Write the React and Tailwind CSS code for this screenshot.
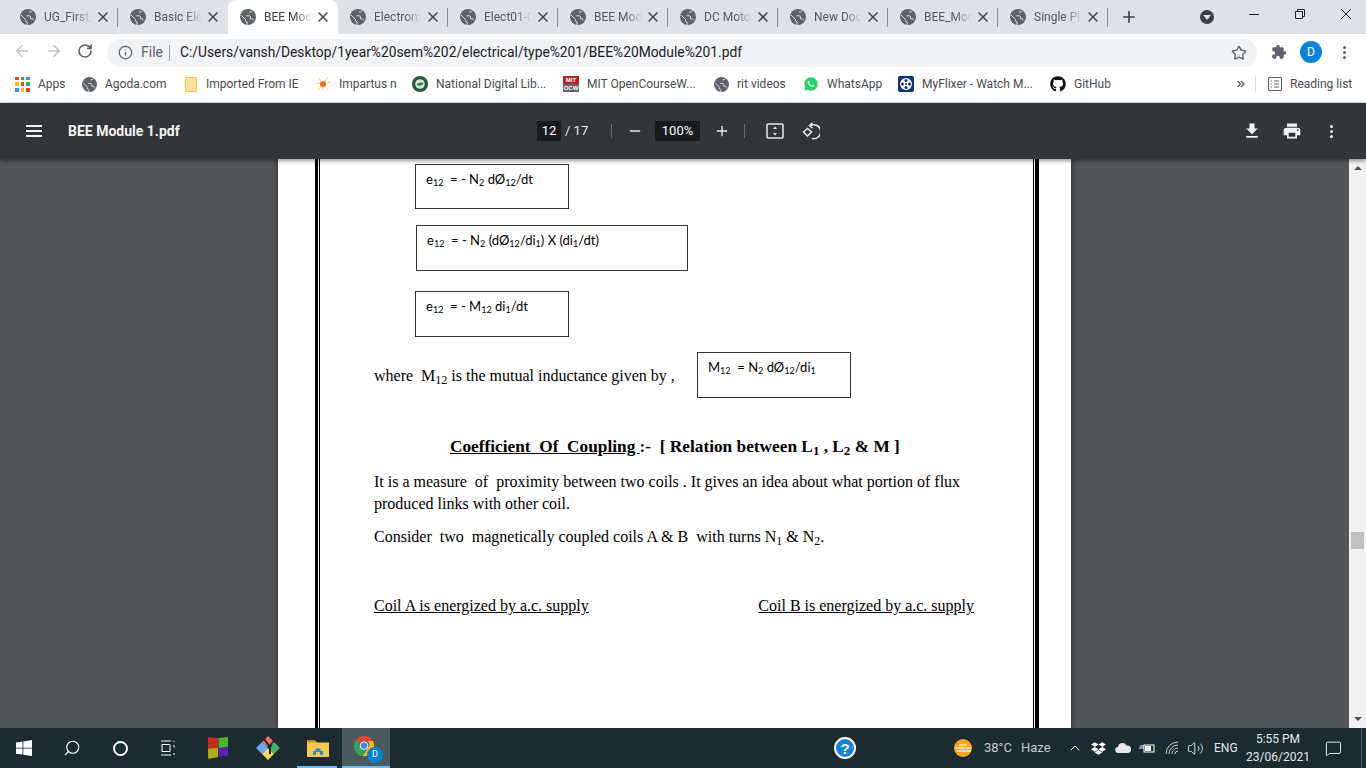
import { ArrowLeft, ArrowRight, RotateCw, Info, Star, X, Plus, Minus, ChevronUp, ChevronsRight, Search, MessageSquare, Volume2 } from 'lucide-react'
import { FaGithub, FaDropbox } from 'react-icons/fa'
import { RiWhatsappFill } from 'react-icons/ri'

const tabs = [
  { title: 'UG_First_', line: true },
  { title: 'Basic Ele', line: false },
  { title: 'BEE Mod', line: false, active: true },
  { title: 'Electrom', line: true },
  { title: 'Elect01-C', line: true },
  { title: 'BEE Mod', line: true },
  { title: 'DC Moto', line: true },
  { title: 'New Doc', line: true },
  { title: 'BEE_Moc', line: true },
  { title: 'Single Pl', line: true },
]

function Globe({ className = 'w-4 h-4' }) {
  return (
    <svg viewBox="0 0 16 16" className={`${className} shrink-0`}>
      <circle cx="8" cy="8" r="8" fill="#5f6368" />
      <path d="M1 6l4.500 4.500v1a1.600 1.600 0 0 0 1.600 1.600V16M9 3h1.600A1.600 1.600 0 0 0 12 1.600M6.500 6.800h3.100a.8.8 0 0 1 .8.8v2.200h1.400c1 0 1.600.7 1.900 1.600" fill="none" stroke="#e8eaed" strokeWidth="0.9" />
    </svg>
  )
}

function Tab({ tab }) {
  return (
    <div className={`relative w-[110px] h-[34px] flex items-center pl-3 shrink-0 ${tab.active ? 'bg-white rounded-t-lg' : ''}`}>
      <Globe />
      <span className={`ml-2 w-[48px] overflow-hidden whitespace-nowrap text-[12px] [mask-image:linear-gradient(to_right,black_65%,transparent)] ${tab.active ? 'text-[#3c4043]' : 'text-[#55585c]'}`}>
        {tab.title}
      </span>
      <X className="ml-[3px] w-4 h-4 text-[#45484c]" strokeWidth={2.4} />
      {tab.line && <div className="absolute right-0 top-[8px] h-[19px] w-px bg-[#8a8d91]"></div>}
    </div>
  )
}

function Bookmark({ width, icon, label }) {
  return (
    <div className="flex items-center gap-2 shrink-0" style={{ width }}>
      {icon}
      <span className="text-[12px] text-[#484b4f] whitespace-nowrap">{label}</span>
    </div>
  )
}

function AppsIcon() {
  const colors = ['#ea4335', '#34a853', '#4285f4', '#fbbc04', '#ea4335', '#34a853', '#4285f4', '#fbbc04', '#ea4335']
  return (
    <div className="w-[15px] h-[15px] grid grid-cols-3 gap-[2px]">
      {colors.map((c, i) => (
        <div key={i} style={{ background: c }}></div>
      ))}
    </div>
  )
}

function ImpartusIcon() {
  return (
    <svg viewBox="0 0 16 16" className="w-4 h-4">
      <path d="M8 8L3 1M8 8l5-7M8 8L0 7M8 8l8-2M8 8l-5 6M8 8l5 6M8 8v7" stroke="#f5cf62" strokeWidth="1" />
      <circle cx="8" cy="8" r="3" fill="#ee6c2a" />
    </svg>
  )
}

function NationalIcon() {
  return (
    <svg viewBox="0 0 16 16" className="w-4 h-4">
      <circle cx="8" cy="8" r="8" fill="#24563a" />
      <circle cx="8" cy="8" r="4.800" fill="#d8e4d8" />
      <path d="M4.500 9c2-2.500 4-3 7-2-1 2.500-3.500 3.500-7 2z" fill="#3b7a52" />
    </svg>
  )
}

function FlixerIcon() {
  return (
    <svg viewBox="0 0 16 16" className="w-4 h-4">
      <rect width="16" height="16" rx="2" fill="#12337c" />
      <circle cx="8" cy="8" r="6" fill="#fff" />
      <circle cx="8" cy="8" r="1" fill="#12337c" />
      <circle cx="8" cy="4.500" r="1.500" fill="#12337c" />
      <circle cx="8" cy="11.500" r="1.500" fill="#12337c" />
      <circle cx="4.500" cy="8" r="1.500" fill="#12337c" />
      <circle cx="11.500" cy="8" r="1.500" fill="#12337c" />
    </svg>
  )
}

function ChromeIcon() {
  return (
    <div className="relative w-[24px] h-[24px]">
      <svg viewBox="0 0 24 24" className="w-[22px] h-[22px]">
        <path d="M11 0a11 11 0 0 1 9.500 5.500H11a5.500 5.500 0 0 0-5 3.200L2.700 3.800A11 11 0 0 1 11 0z" fill="#ea4335" />
        <path d="M2.700 3.800L7.500 12a4.500 4.500 0 0 0 5 3l-3 6.900A11 11 0 0 1 2.700 3.800z" fill="#34a853" />
        <path d="M20.500 5.500A11 11 0 0 1 9.500 21.900L15 13a4.500 4.500 0 0 0-.5-7.500z" fill="#fbbc04" />
        <circle cx="11" cy="10.500" r="4.200" fill="#4285f4" stroke="#fff" strokeWidth="1" />
      </svg>
      <div className="absolute right-[-5px] bottom-[-3px] w-[16px] h-[16px] rounded-full bg-[#0b7fd0] flex items-center justify-center text-[9px] text-white">D</div>
    </div>
  )
}

function PdfBox({ className, children }) {
  return <div className={`border border-[#333] text-[13px] [&_sub]:text-[70%] font-['Lato',sans-serif] text-black leading-[18px] shrink-0 ${className}`}>{children}</div>
}

export default function App() {
  return (
    <div className="w-[1366px] h-[768px] overflow-hidden flex flex-col font-['Roboto',sans-serif] bg-white">
      {/* tab strip */}
      <div className="h-[34px] shrink-0 bg-[#dee1e6] flex items-center pl-2">
        {tabs.map((tab, i) => (
          <Tab key={i} tab={tab} />
        ))}
        <Plus className="ml-[12px] w-[18px] h-[18px] text-[#3c4043]" strokeWidth={2.2} />
        <div className="ml-[62px] w-[14px] h-[14px] rounded-full bg-[#3c4043] flex items-center justify-center">
          <div className="w-0 h-0 border-x-[4px] border-x-transparent border-t-[5px] border-t-[#dee1e6]"></div>
        </div>
        <div className="ml-[35px] w-[10px] h-px bg-[#222] mb-[6px]"></div>
        <svg viewBox="0 0 10 10" className="ml-[36px] w-[10px] h-[10px] mb-[6px]" fill="none" stroke="#222">
          <path d="M2.500 2.500V.5h7v7h-2M.5 2.500h7v7h-7z" />
        </svg>
        <svg viewBox="0 0 10 10" className="ml-[36px] w-[10px] h-[10px] mb-[6px]" fill="none" stroke="#222">
          <path d="M0 0l10 10M10 0L0 10" />
        </svg>
      </div>

      {/* address bar */}
      <div className="h-[33px] shrink-0 bg-white flex items-center">
        <ArrowLeft className="ml-[13px] w-[18px] h-[18px] text-[#bdc1c6]" strokeWidth={2} />
        <ArrowRight className="ml-[14px] w-[18px] h-[18px] text-[#bdc1c6]" strokeWidth={2} />
        <RotateCw className="ml-[14px] w-[16px] h-[16px] text-[#5f6368]" strokeWidth={2.4} />
        <div className="ml-[14px] w-[1150px] h-[28px] rounded-full bg-[#f1f3f4] flex items-center pl-[11px] mt-[4px]">
          <Info className="w-[15px] h-[15px] text-[#5f6368]" strokeWidth={2} />
          <span className="ml-[8px] w-[21px] text-[14px] text-[#5f6368]">File</span>
          <div className="ml-[7px] w-px h-[16px] bg-[#9aa0a6]"></div>
          <span className="ml-[10px] text-[13.8px] text-[#202124] whitespace-nowrap">C:/Users/vansh/Desktop/1year%20sem%202/electrical/type%201/BEE%20Module%201.pdf</span>
          <Star className="ml-auto mr-[10px] w-[16px] h-[16px] text-[#5f6368]" strokeWidth={2} />
        </div>
        <svg viewBox="0 0 24 24" className="ml-[14px] w-[16px] h-[16px] mt-[3px]" fill="#5f6368">
          <path d="M20.500 11H19V7c0-1.100-.9-2-2-2h-4V3.500C13 2.120 11.880 1 10.500 1S8 2.120 8 3.500V5H4c-1.100 0-1.990.9-1.990 2v3.800H3.500c1.490 0 2.700 1.210 2.700 2.700s-1.210 2.700-2.700 2.700H2V20c0 1.100.9 2 2 2h3.800v-1.500c0-1.490 1.210-2.700 2.700-2.700 1.490 0 2.700 1.210 2.700 2.700V22H17c1.100 0 2-.9 2-2v-4h1.500c1.380 0 2.500-1.120 2.500-2.500S21.880 11 20.500 11z" />
        </svg>
        <div className="ml-[13px] mt-[3px] w-[22px] h-[22px] rounded-full bg-[#0b84d6] flex items-center justify-center text-[12px] text-white">D</div>
        <div className="ml-[21px] mt-[3px] flex flex-col gap-[2px]">
          <div className="w-[3px] h-[3px] rounded-full bg-[#5f6368]"></div>
          <div className="w-[3px] h-[3px] rounded-full bg-[#5f6368]"></div>
          <div className="w-[3px] h-[3px] rounded-full bg-[#5f6368]"></div>
        </div>
      </div>

      {/* bookmarks */}
      <div className="h-[36px] shrink-0 bg-white flex items-center pl-[15px] pb-px border-b border-[#dadce0]">
        <Bookmark width={67} icon={<AppsIcon />} label="Apps" />
        <Bookmark width={102} icon={<Globe className="w-[15px] h-[15px]" />} label="Agoda.com" />
        <Bookmark width={131} icon={<div className="w-[12px] h-[15px] ml-[1px] mr-[1px] rounded-[1px] bg-[#fde293] border border-[#f1c644]"></div>} label="Imported From IE" />
        <Bookmark width={97} icon={<ImpartusIcon />} label="Impartus n" />
        <Bookmark width={151} icon={<NationalIcon />} label="National Digital Lib..." />
        <Bookmark
          width={151}
          icon={
            <div className="w-4 h-4 flex flex-col font-['Liberation_Sans',sans-serif] font-bold text-[6px] leading-[8px] text-white text-center">
              <div className="bg-[#b3202a]">MIT</div>
              <div className="bg-[#666]">OCW</div>
            </div>
          }
          label="MIT OpenCourseW..."
        />
        <Bookmark width={89} icon={<Globe className="w-[15px] h-[15px]" />} label="rit videos" />
        <Bookmark width={95} icon={<RiWhatsappFill className="w-4 h-4 text-[#25d366]" />} label="WhatsApp" />
        <Bookmark width={152} icon={<FlixerIcon />} label="MyFlixer - Watch M..." />
        <Bookmark width={185} icon={<FaGithub className="w-4 h-4 text-[#111]" />} label="GitHub" />
        <ChevronsRight className="w-[12px] h-[12px] text-[#5f6368]" strokeWidth={3} />
        <div className="ml-[8px] w-px h-[16px] bg-[#dadce0]"></div>
        <svg viewBox="0 0 14 14" className="ml-[12px] w-[14px] h-[14px]" fill="none" stroke="#5f6368">
          <path d="M.5.5h13v13H.5zM3 4h1M6 4h5M3 7h1M6 7h5M3 10h1M6 10h5" />
        </svg>
        <span className="ml-[8px] text-[12px] text-[#484b4f] whitespace-nowrap">Reading list</span>
      </div>

      {/* pdf toolbar */}
      <div className="relative z-10 h-[56px] shrink-0 bg-[#323639] flex items-center shadow-[0_2px_4px_rgba(0,0,0,0.4)] text-white">
        <div className="ml-[26px] w-[16px] flex flex-col gap-[3px]">
          <div className="h-[2px] bg-[#f1f3f4]"></div>
          <div className="h-[2px] bg-[#f1f3f4]"></div>
          <div className="h-[2px] bg-[#f1f3f4]"></div>
        </div>
        <span className="ml-[26px] w-[469px] text-[14px] font-bold text-[#f1f3f4]">BEE Module 1.pdf</span>
        <div className="w-[24px] h-[20px] bg-[#191b1c] text-[13px] flex items-center justify-center">12</div>
        <span className="ml-[4px] w-[25px] text-[13px] text-[#e8eaed]">/ 17</span>
        <div className="ml-[21px] w-px h-[14px] bg-[#6b6f72]"></div>
        <Minus className="ml-[15px] w-[16px] h-[16px] text-[#e8eaed]" strokeWidth={2} />
        <div className="ml-[12px] w-[45px] h-[20px] bg-[#191b1c] text-[13px] flex items-center justify-center">100%</div>
        <Plus className="ml-[14px] w-[16px] h-[16px] text-[#e8eaed]" strokeWidth={2} />
        <div className="ml-[14px] w-px h-[14px] bg-[#6b6f72]"></div>
        <svg viewBox="0 0 18 16" className="ml-[21px] w-[18px] h-[16px]" fill="none" stroke="#e8eaed" strokeWidth="1.500">
          <rect x="1" y="1" width="16" height="14" rx="1" />
          <path d="M9 3.500L11 6H7zM9 12.500L11 10H7z" fill="#e8eaed" stroke="none" />
        </svg>
        <svg viewBox="0 0 18 18" className="ml-[18px] w-[18px] h-[18px]" fill="none" stroke="#e8eaed" strokeWidth="1.500">
          <path d="M5.500 6.500L1.500 10l4 4 4-4z" />
          <path d="M8.500 3.500A7 7 0 1 1 10 16.500" />
          <path d="M10.500 .8L7.500 3.500l3 2.700" />
        </svg>
        <svg viewBox="0 0 24 24" className="ml-[422px] w-[20px] h-[20px]" fill="#f1f3f4">
          <path d="M19 9h-4V3H9v6H5l7 7 7-7zM5 18v2h14v-2H5z" />
        </svg>
        <svg viewBox="0 0 24 24" className="ml-[20px] w-[20px] h-[20px]" fill="#f1f3f4">
          <path d="M19 8H5c-1.660 0-3 1.340-3 3v6h4v4h12v-4h4v-6c0-1.660-1.340-3-3-3zm-3 11H8v-5h8v5zm3-7c-.55 0-1-.45-1-1s.45-1 1-1 1 .45 1 1-.45 1-1 1zm-1-9H6v4h12V3z" />
        </svg>
        <div className="ml-[28px] flex flex-col gap-[2px]">
          <div className="w-[3px] h-[3px] rounded-full bg-[#f1f3f4]"></div>
          <div className="w-[3px] h-[3px] rounded-full bg-[#f1f3f4]"></div>
          <div className="w-[3px] h-[3px] rounded-full bg-[#f1f3f4]"></div>
        </div>
      </div>

      {/* pdf body */}
      <div className="flex-1 min-h-0 flex bg-[#525659]">
        <div className="w-[278px] shrink-0"></div>
        <div className="w-[793px] shrink-0 bg-white shadow-[0_0_6px_rgba(0,0,0,0.5)] pl-[37px] font-['Liberation_Serif',serif] text-black text-[16px] overflow-hidden">
          <div className="w-[724px] h-full border-l-[3px] border-r-[4px] border-black">
            <div className="ml-px mr-px h-full border-x border-black">
              <div className="pl-[54px] pt-[5px]">
                <div className="pl-[41px]">
                  <PdfBox className="w-[154px] h-[45px] pl-[10px] pt-[5px]">
                    e<sub>12</sub>&nbsp; = - N<sub>2</sub> dØ<sub>12</sub>/dt
                  </PdfBox>
                  <PdfBox className="mt-[16px] ml-px w-[272px] h-[46px] pl-[10px] pt-[5px]">
                    e<sub>12</sub>&nbsp; = - N<sub>2</sub> (dØ<sub>12</sub>/di<sub>1</sub>) X (di<sub>1</sub>/dt)
                  </PdfBox>
                  <PdfBox className="mt-[20px] w-[154px] h-[46px] pl-[10px] pt-[5px]">
                    e<sub>12</sub>&nbsp; = - M<sub>12</sub> di<sub>1</sub>/dt
                  </PdfBox>
                </div>
                <div className="mt-[15px] flex items-start">
                  <span className="w-[323px] shrink-0 pt-[15px] leading-[18px]">
                    where&nbsp; M<sub>12</sub> is the mutual inductance given by ,
                  </span>
                  <PdfBox className="w-[154px] h-[46px] pl-[10px] pt-[5px]">
                    M<sub>12</sub>&nbsp; = N<sub>2</sub> dØ<sub>12</sub>/di<sub>1</sub>
                  </PdfBox>
                </div>
                <h2 className="mt-[39px] ml-[76px] text-[17.3px] font-bold leading-[20px] whitespace-nowrap">
                  <span className="underline">Coefficient&nbsp; Of&nbsp; Coupling </span>:-&nbsp; [ Relation between L<sub>1</sub> , L<sub>2</sub> &amp; M ]
                </h2>
                <p className="mt-[14px] w-[600px] leading-[22px]">
                  It is a measure&nbsp; of&nbsp; proximity between two coils . It gives an idea about what portion of flux produced links with other coil.
                </p>
                <p className="mt-[11px] leading-[22px]">
                  Consider&nbsp; two&nbsp; magnetically coupled coils A &amp; B&nbsp; with turns N<sub>1</sub> &amp; N<sub>2</sub>.
                </p>
                <div className="mt-[47px] w-[600px] flex justify-between leading-[22px] underline">
                  <span>Coil A is energized by a.c. supply</span>
                  <span>Coil B is energized by a.c. supply</span>
                </div>
              </div>
            </div>
          </div>
        </div>
        <div className="flex-1"></div>
        <div className="w-[17px] shrink-0 bg-[#f1f1f1] flex flex-col items-center">
          <div className="mt-[7px] w-0 h-0 border-x-[4px] border-x-transparent border-b-[4px] border-b-[#505050]"></div>
          <div className="mt-[362px] w-[13px] h-[17px] bg-[#c1c1c1]"></div>
          <div className="mt-[168px] w-0 h-0 border-x-[4px] border-x-transparent border-t-[4px] border-t-[#505050]"></div>
        </div>
      </div>

      {/* taskbar */}
      <div className="h-[40px] shrink-0 bg-[#1b2b30] flex items-center text-[#e4e9ea] text-[12px] [&>*]:shrink-0">
        <div className="w-[48px] h-full flex items-center justify-center">
          <svg viewBox="0 0 16 16" className="w-4 h-4" fill="#fff">
            <path d="M0 2.400l6.500-.9v6.200H0zM7.300 1.400L16 0v7.700H7.300zM0 8.400h6.500v6.200L0 13.700zM7.300 8.400H16V16l-8.700-1.300z" />
          </svg>
        </div>
        <div className="w-[48px] h-full flex items-center justify-center">
          <Search className="w-[18px] h-[18px] text-white -scale-x-100" strokeWidth={1.500} />
        </div>
        <div className="w-[48px] h-full flex items-center justify-center">
          <div className="w-[15px] h-[15px] rounded-full border-2 border-white"></div>
        </div>
        <div className="w-[48px] h-full flex items-center justify-center">
          <svg viewBox="0 0 16 16" className="w-4 h-4" fill="none" stroke="#fff">
            <path d="M1 1h10M1 15h10M2 4.500h8v7H2zM14 1v1M14 5v2.500M14 13v2" />
          </svg>
        </div>
        <div className="w-[51px] h-full flex items-center justify-center">
          <svg viewBox="0 0 22 24" className="w-[22px] h-[24px]">
            <path d="M1 1l10 1v10L1 12z" fill="#c8281e" />
            <path d="M11.500 2L21 1v10l-9.500 1z" fill="#4cb32e" />
            <path d="M1 12.500l10-.5v9l-9.800 2z" fill="#b4ac1c" />
            <path d="M11.500 12l9.500-.5V20l-9.500 1z" fill="#5a1fb0" />
          </svg>
        </div>
        <div className="w-[50px] h-full flex items-center justify-center">
          <svg viewBox="0 0 24 24" className="w-[24px] h-[24px]">
            <path d="M6 6l6-6 5 5-6 6z" fill="#f07070" />
            <path d="M12 12l6-6 6 6-6 6z" fill="#45b06a" />
            <path d="M0 12l6-6 6 6-6 6z" fill="#6ca8f0" />
            <path d="M6 18l6-6 6 6-6 6z" fill="#f6d860" />
            <path d="M8 3l6 8v7M16 9l-4 3" fill="none" stroke="#222" strokeWidth="2" />
          </svg>
        </div>
        <div className="relative w-[49px] h-full flex items-center justify-center">
          <svg viewBox="0 0 22 18" className="w-[22px] h-[18px]">
            <path d="M0 1.500h8l2 2h12V18H0z" fill="#f2c94c" />
            <path d="M0 1.500h8l2 2H0z" fill="#d99a1c" />
            <path d="M6 16v-4h2.500V9.500h5V12H16v4h-3v-3H9v3z" fill="#2b8ad8" />
          </svg>
          <div className="absolute bottom-0 left-[4px] right-[5px] h-[2px] bg-[#76b9ed]"></div>
        </div>
        <div className="relative w-[48px] h-full bg-[#4a5a5f] flex items-center justify-center">
          <ChromeIcon />
          <div className="absolute bottom-0 inset-x-0 h-[2px] bg-[#76b9ed]"></div>
        </div>
        <div className="ml-[444px] w-[22px] h-[22px] rounded-full bg-[#1583d8] border-2 border-white flex items-center justify-center text-[15px] font-bold text-white leading-none font-['Liberation_Sans',sans-serif]">?</div>
        <svg viewBox="0 0 18 18" className="ml-[98px] w-[18px] h-[18px]">
          <circle cx="9" cy="9" r="9" fill="#f5a623" />
          <path d="M1 9h16M3 12h14M5 6h8" stroke="#f3e9d2" strokeWidth="1.500" />
        </svg>
        <span className="ml-[12px] w-[37px] text-[13px] text-[#c4cbcd] whitespace-nowrap">38°C</span>
        <span className="w-[46px] text-[13px] text-[#c4cbcd] whitespace-nowrap">Haze</span>
        <ChevronUp className="w-4 h-4 text-white" strokeWidth={1.500} />
        <FaDropbox className="ml-[8px] w-[15px] h-[15px] text-white" />
        <svg viewBox="0 0 16 10" className="ml-[9px] w-[16px] h-[10px]" fill="#e8e8e8">
          <path d="M3.500 10a3 3 0 0 1-.5-6 4.500 4.500 0 0 1 8.500-1.500A3.800 3.800 0 0 1 13 10z" />
        </svg>
        <svg viewBox="0 0 16 12" className="ml-[8px] w-[16px] h-[12px]" fill="none" stroke="#fff">
          <rect x="5" y="3" width="10" height="7" />
          <path d="M6 4h6v5H6z" fill="#fff" stroke="none" />
          <path d="M0 6h5M2 3v2M4 3v2" />
        </svg>
        <svg viewBox="0 0 16 14" className="ml-[10px] w-[16px] h-[14px]" fill="none" stroke="#cfd4d6">
          <path d="M1 13A12 12 0 0 1 13 1M4 13a9 9 0 0 1 9-9M7 13a6 6 0 0 1 6-6M10 13a3 3 0 0 1 3-3" />
        </svg>
        <Volume2 className="ml-[6px] w-[17px] h-[17px] text-[#e4e9ea]" strokeWidth={1.300} />
        <span className="ml-[10px] w-[24px] text-[12px]">ENG</span>
        <div className="w-[80px] text-center leading-[18px] text-[12px]">
          <div>5:55 PM</div>
          <div>23/06/2021</div>
        </div>
        <MessageSquare className="ml-[7px] w-[17px] h-[17px] text-white" strokeWidth={1.300} />
        <div className="ml-[19px] w-px h-full bg-[#4a5a5f]"></div>
      </div>
    </div>
  )
}
